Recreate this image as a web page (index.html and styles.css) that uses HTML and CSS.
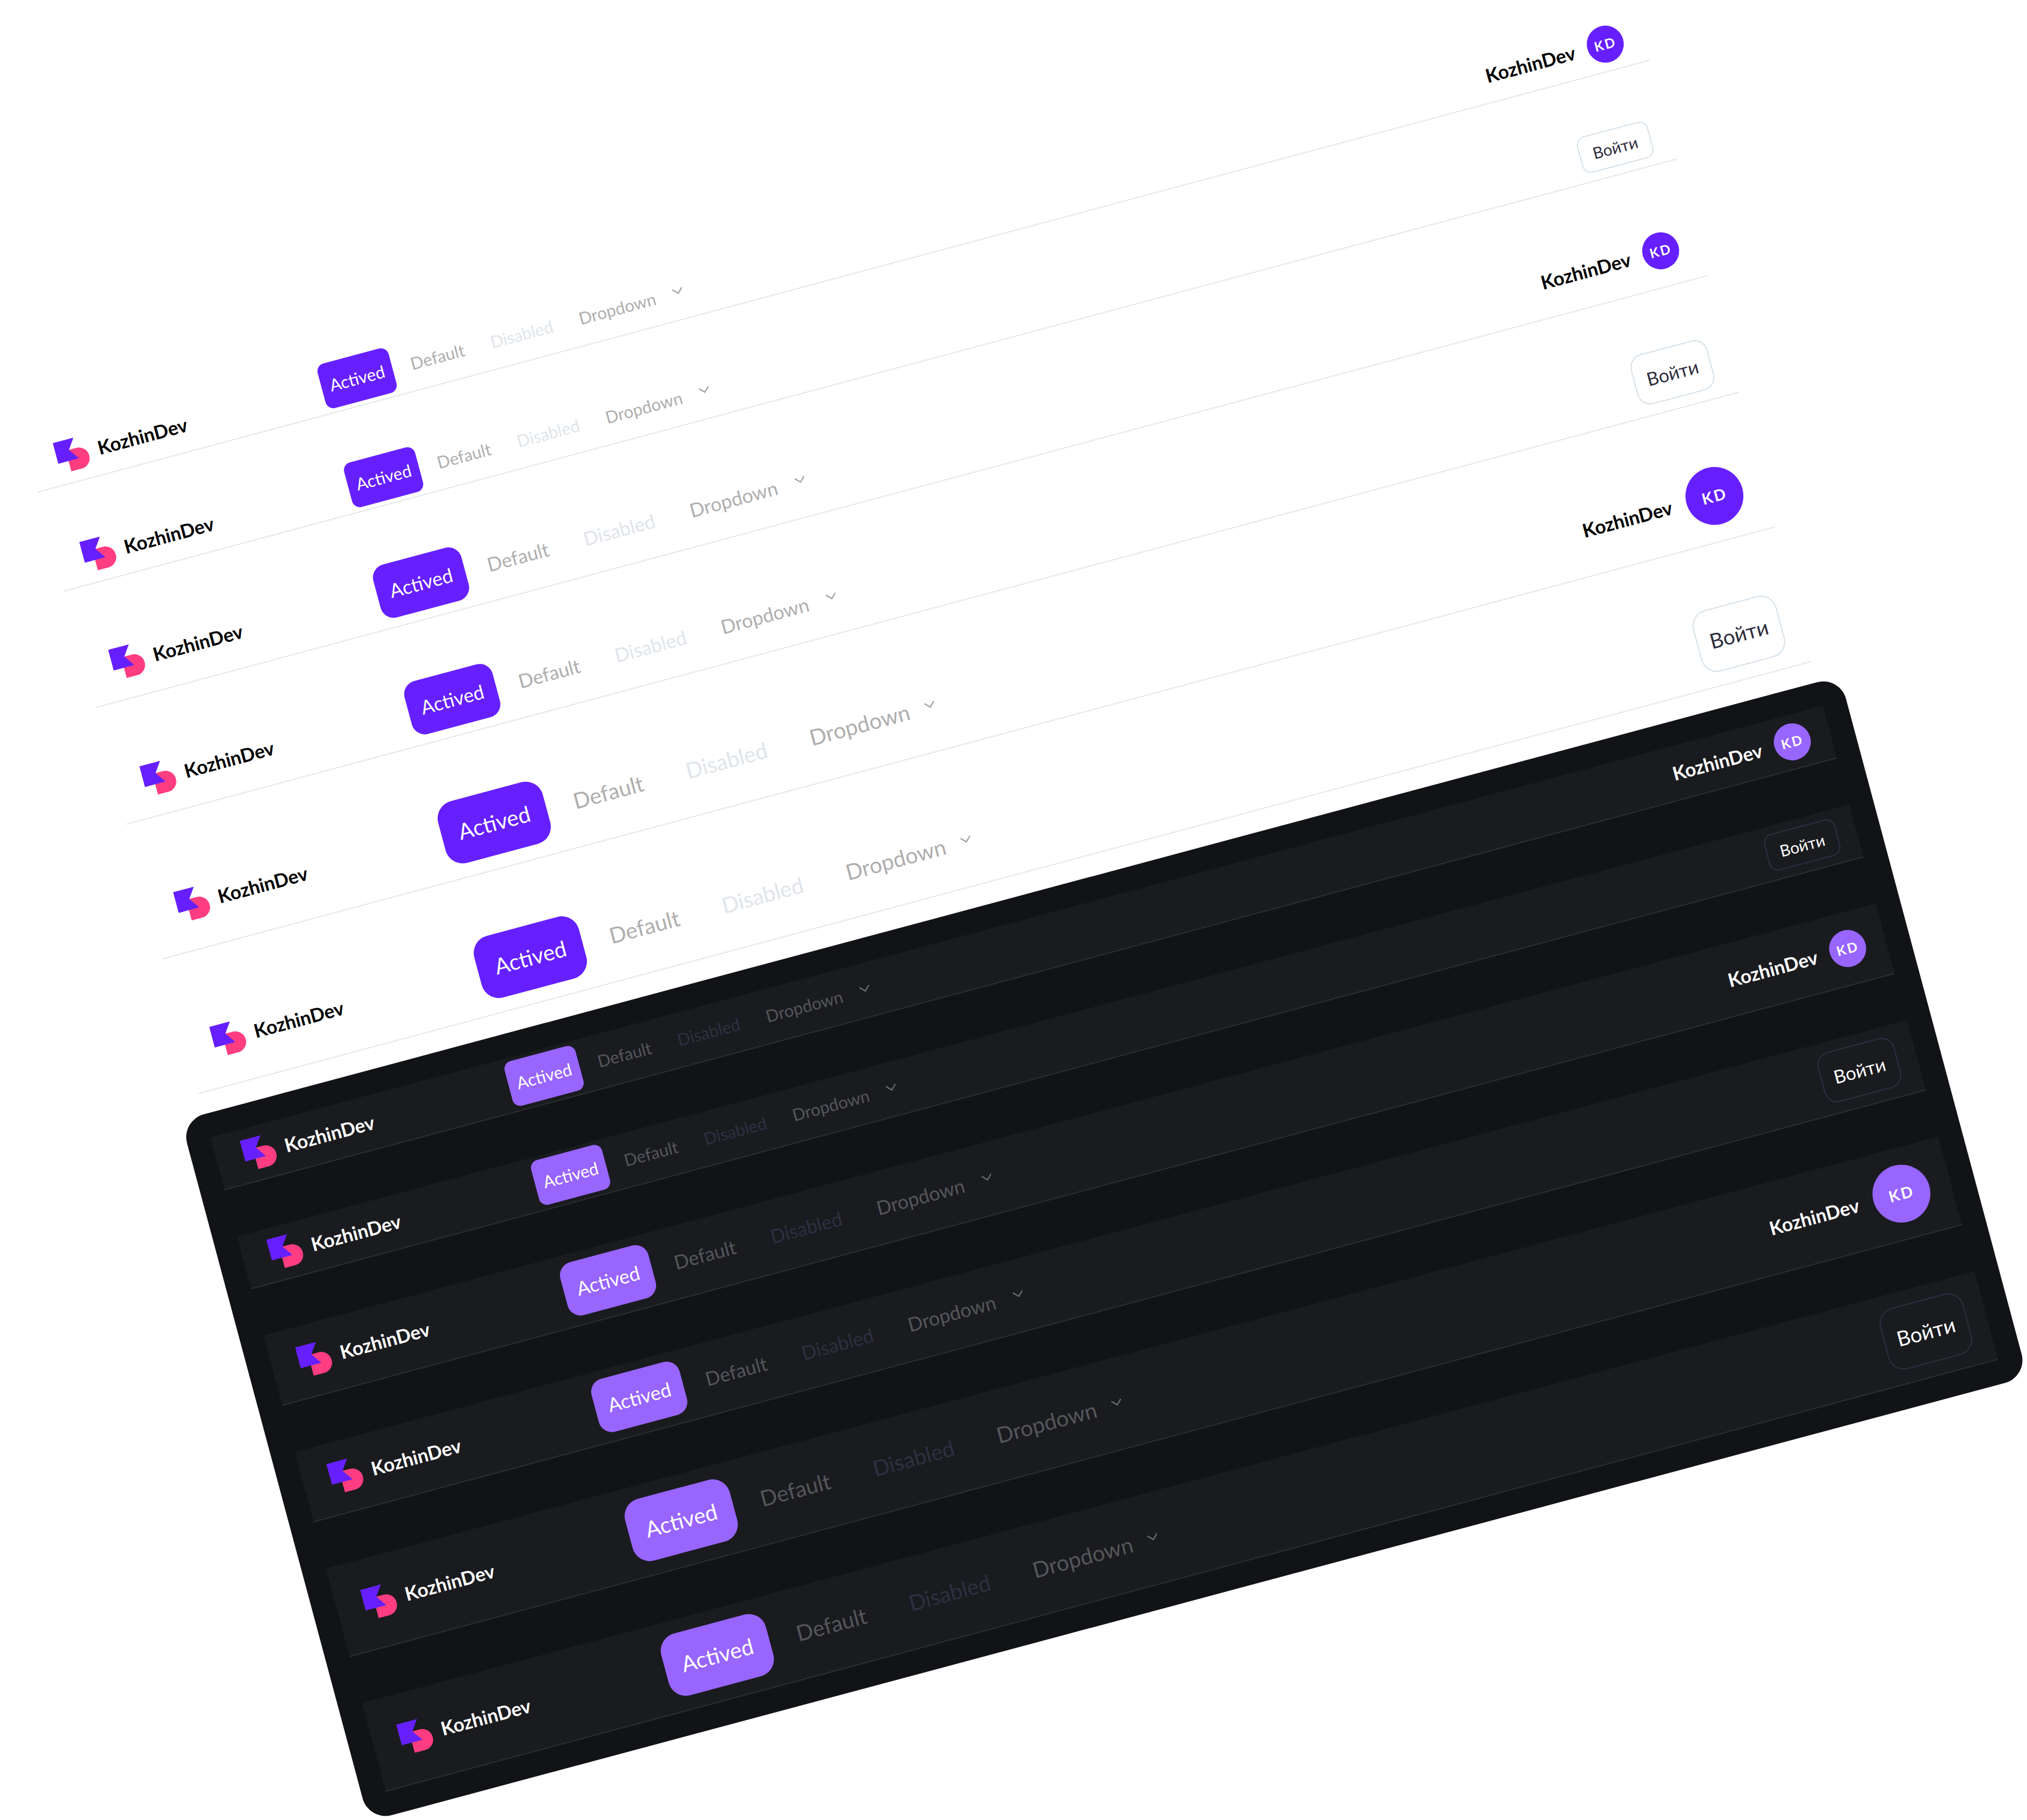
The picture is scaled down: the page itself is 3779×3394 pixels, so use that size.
FILE: index.html
```html
<!DOCTYPE html>
<html>
<head>
    <link rel="stylesheet" href="styles.css">
</head>
<body>
    <svg class="defs" width="0" height="0">
        <symbol id="logo" viewBox="0 0 60 60">
            <path fill="#ff3d80" d="M20 20H40A20 20 0 0 1 40 60H20Z"/>
            <path fill="#6620ff" d="M0 0H40L26 20L40 40H0Z"/>
        </symbol>
        <symbol id="chevron" viewBox="0 0 24 24">
            <path fill="none" stroke="currentColor" stroke-width="2.4" d="M3 8L12 17L21 8"/>
        </symbol>
    </svg>

    <div class="stage">
        <div class="list light">
            <div class="row sm">
                <div class="brand"><svg class="logo"><use href="#logo"/></svg><span class="name">KozhinDev</span></div>
                <nav class="nav"><a class="item active">Actived</a><a class="item">Default</a><a class="item off">Disabled</a><a class="item">Dropdown<svg class="chev"><use href="#chevron"/></svg></a></nav>
                <div class="side"><span class="name">KozhinDev</span><span class="avatar">KD</span></div>
            </div>
            <div class="row sm">
                <div class="brand"><svg class="logo"><use href="#logo"/></svg><span class="name">KozhinDev</span></div>
                <nav class="nav"><a class="item active">Actived</a><a class="item">Default</a><a class="item off">Disabled</a><a class="item">Dropdown<svg class="chev"><use href="#chevron"/></svg></a></nav>
                <div class="side"><a class="login">Войти</a></div>
            </div>
            <div class="row md">
                <div class="brand"><svg class="logo"><use href="#logo"/></svg><span class="name">KozhinDev</span></div>
                <nav class="nav"><a class="item active">Actived</a><a class="item">Default</a><a class="item off">Disabled</a><a class="item">Dropdown<svg class="chev"><use href="#chevron"/></svg></a></nav>
                <div class="side"><span class="name">KozhinDev</span><span class="avatar">KD</span></div>
            </div>
            <div class="row md">
                <div class="brand"><svg class="logo"><use href="#logo"/></svg><span class="name">KozhinDev</span></div>
                <nav class="nav"><a class="item active">Actived</a><a class="item">Default</a><a class="item off">Disabled</a><a class="item">Dropdown<svg class="chev"><use href="#chevron"/></svg></a></nav>
                <div class="side"><a class="login">Войти</a></div>
            </div>
            <div class="row lg">
                <div class="brand"><svg class="logo"><use href="#logo"/></svg><span class="name">KozhinDev</span></div>
                <nav class="nav"><a class="item active">Actived</a><a class="item">Default</a><a class="item off">Disabled</a><a class="item">Dropdown<svg class="chev"><use href="#chevron"/></svg></a></nav>
                <div class="side"><span class="name">KozhinDev</span><span class="avatar">KD</span></div>
            </div>
            <div class="row lg">
                <div class="brand"><svg class="logo"><use href="#logo"/></svg><span class="name">KozhinDev</span></div>
                <nav class="nav"><a class="item active">Actived</a><a class="item">Default</a><a class="item off">Disabled</a><a class="item">Dropdown<svg class="chev"><use href="#chevron"/></svg></a></nav>
                <div class="side"><a class="login">Войти</a></div>
            </div>
        </div>

        <div class="list dark">
            <div class="row sm">
                <div class="brand"><svg class="logo"><use href="#logo"/></svg><span class="name">KozhinDev</span></div>
                <nav class="nav"><a class="item active">Actived</a><a class="item">Default</a><a class="item off">Disabled</a><a class="item">Dropdown<svg class="chev"><use href="#chevron"/></svg></a></nav>
                <div class="side"><span class="name">KozhinDev</span><span class="avatar">KD</span></div>
            </div>
            <div class="row sm">
                <div class="brand"><svg class="logo"><use href="#logo"/></svg><span class="name">KozhinDev</span></div>
                <nav class="nav"><a class="item active">Actived</a><a class="item">Default</a><a class="item off">Disabled</a><a class="item">Dropdown<svg class="chev"><use href="#chevron"/></svg></a></nav>
                <div class="side"><a class="login">Войти</a></div>
            </div>
            <div class="row md">
                <div class="brand"><svg class="logo"><use href="#logo"/></svg><span class="name">KozhinDev</span></div>
                <nav class="nav"><a class="item active">Actived</a><a class="item">Default</a><a class="item off">Disabled</a><a class="item">Dropdown<svg class="chev"><use href="#chevron"/></svg></a></nav>
                <div class="side"><span class="name">KozhinDev</span><span class="avatar">KD</span></div>
            </div>
            <div class="row md">
                <div class="brand"><svg class="logo"><use href="#logo"/></svg><span class="name">KozhinDev</span></div>
                <nav class="nav"><a class="item active">Actived</a><a class="item">Default</a><a class="item off">Disabled</a><a class="item">Dropdown<svg class="chev"><use href="#chevron"/></svg></a></nav>
                <div class="side"><a class="login">Войти</a></div>
            </div>
            <div class="row lg">
                <div class="brand"><svg class="logo"><use href="#logo"/></svg><span class="name">KozhinDev</span></div>
                <nav class="nav"><a class="item active">Actived</a><a class="item">Default</a><a class="item off">Disabled</a><a class="item">Dropdown<svg class="chev"><use href="#chevron"/></svg></a></nav>
                <div class="side"><span class="name">KozhinDev</span><span class="avatar">KD</span></div>
            </div>
            <div class="row lg">
                <div class="brand"><svg class="logo"><use href="#logo"/></svg><span class="name">KozhinDev</span></div>
                <nav class="nav"><a class="item active">Actived</a><a class="item">Default</a><a class="item off">Disabled</a><a class="item">Dropdown<svg class="chev"><use href="#chevron"/></svg></a></nav>
                <div class="side"><a class="login">Войти</a></div>
            </div>
        </div>
    </div>
</body>
</html>
```

FILE: styles.css
```css
/* page */
html, body {
    margin: 0;
    height: 100%;
    overflow: hidden;
    background: #fff;
}

body {
    font-family: "Lato", "Noto Sans", sans-serif;
}

.defs {
    display: block;
}

/* the whole sheet is tilted */
.stage {
    width: 3202px;
    transform-origin: 0 0;
    transform: rotate(-15deg) translate(-215px, 803.6px);
}

.list {
    display: flex;
    flex-direction: column;
    gap: 89px;
}

.light {
    padding: 0 45px;
    color: #000;
    --line: #e4e6e8;
    --row: transparent;
    --muted: #aeaeae;
    --off: #dfe5ea;
    --chev: #a2a2a2;
    --accent: #6620ff;
    --login-border: #d5e0e8;
    --login-text: #2e2e3e;
}

.dark {
    margin-top: 39px;
    padding: 45px;
    border-radius: 44px;
    background: #121317;
    color: #fff;
    --line: #2e2f33;
    --row: #1a1b1f;
    --muted: #55565b;
    --off: #2e3040;
    --chev: #6a6b70;
    --accent: #9865ff;
    --login-border: #2e3040;
    --login-text: #fff;
}

/* rows */
.row {
    box-sizing: border-box;
    display: flex;
    align-items: center;
    padding: 0 36px 0 51px;
    background: var(--row);
    border-bottom: 2px solid var(--line);
}

.sm { height: 102px; }
.md { height: 136px; }
.lg { height: 171px; }

.brand {
    display: flex;
    align-items: center;
    gap: 19px;
    width: 511px;
    flex: none;
}

.logo {
    width: 60px;
    height: 60px;
    flex: none;
}

.name {
    font-size: 35.5px;
    font-weight: 700;
    white-space: nowrap;
}

/* nav */
.nav {
    display: flex;
    align-items: center;
}

.item {
    display: flex;
    align-items: center;
    color: var(--muted);
    white-space: nowrap;
}

.item.off {
    color: var(--off);
}

.item.active {
    box-sizing: border-box;
    justify-content: center;
    background: var(--accent);
    color: #fff;
}

.chev {
    width: 24px;
    height: 24px;
    margin-left: 28px;
    margin-bottom: 6px;
    color: var(--chev);
}

.sm .nav { gap: 51px; font-size: 31.5px; }
.sm .chev { margin-left: 31px; }
.sm .item.active { width: 137px; height: 86px; margin-right: -16px; border-radius: 15px; }

.md .nav { gap: 68px; font-size: 36px; }
.md .chev { margin-left: 33px; }
.md .item.active { width: 170px; height: 102px; margin-right: -25px; border-radius: 25px; }

.lg .nav { gap: 83px; font-size: 41px; }
.lg .item.active { width: 202px; height: 119px; margin-right: -31px; border-radius: 33px; }

/* right side */
.side {
    display: flex;
    align-items: center;
    gap: 24px;
    margin-left: auto;
}

.lg .side {
    gap: 28px;
}

.avatar {
    display: flex;
    align-items: center;
    justify-content: center;
    width: 69px;
    height: 69px;
    margin-right: 2px;
    border-radius: 50%;
    background: var(--accent);
    color: #fff;
    font-size: 25px;
    font-weight: 700;
    letter-spacing: 3px;
}

.lg .avatar {
    width: 108px;
    height: 108px;
    margin-right: 4px;
    font-size: 29px;
}

.login {
    box-sizing: border-box;
    display: flex;
    align-items: center;
    justify-content: center;
    border: 2px solid var(--login-border);
    color: var(--login-text);
}

.sm .login { width: 137px; height: 70px; border-radius: 17px; font-size: 30px; }
.md .login { width: 148px; height: 96px; border-radius: 25px; font-size: 34.5px; }
.lg .login { width: 161px; height: 118px; border-radius: 30px; font-size: 39px; }
```
